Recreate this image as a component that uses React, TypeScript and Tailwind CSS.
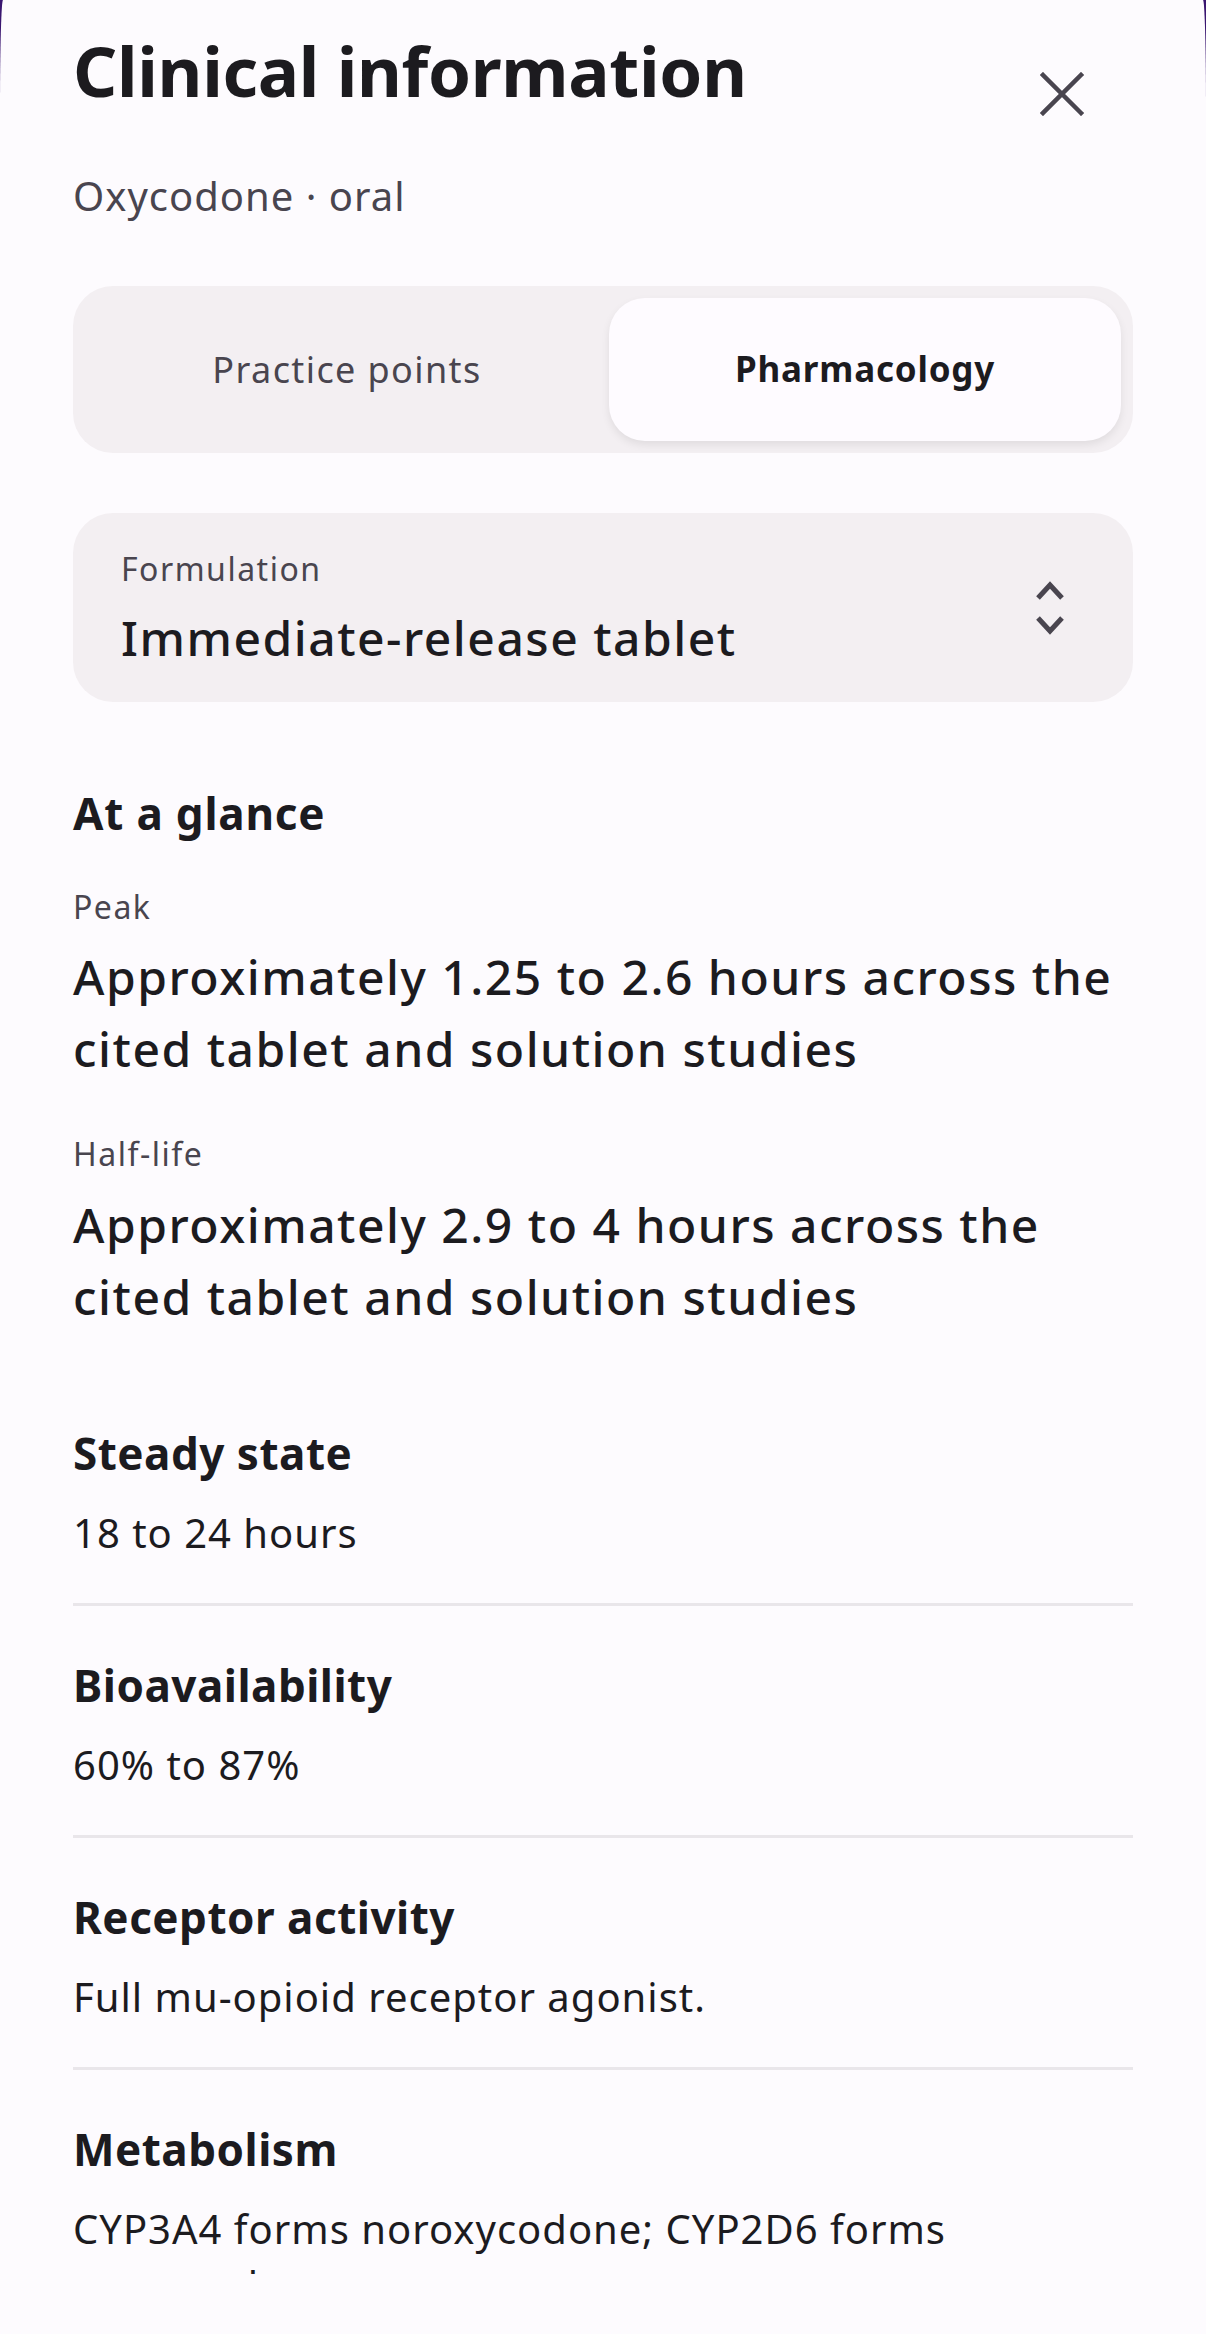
import React from "react";

const font = { fontFamily: '"Noto Sans", "Open Sans", sans-serif' };

interface Fact {
  title: string;
  body: string;
}

const facts: Fact[] = [
  { title: "Steady state", body: "18 to 24 hours" },
  { title: "Bioavailability", body: "60% to 87%" },
  { title: "Receptor activity", body: "Full mu-opioid receptor agonist." },
  {
    title: "Metabolism",
    body: "CYP3A4 forms noroxycodone; CYP2D6 forms oxymorphone.",
  },
];

function CloseIcon() {
  return (
    <svg width="44" height="44" viewBox="0 0 44 44" className="shrink-0">
      <path d="M3 3 L41 41 M41 3 L3 41" stroke="#49454f" strokeWidth="4.5" strokeLinecap="square" fill="none" />
    </svg>
  );
}

function UnfoldIcon() {
  return (
    <svg width="30" height="56" viewBox="0 0 30 56" className="shrink-0">
      <path d="M3 18 L15 5 L27 18" stroke="#49454f" strokeWidth="5" fill="none" />
      <path d="M3 38 L15 51 L27 38" stroke="#49454f" strokeWidth="5" fill="none" />
    </svg>
  );
}

export default function App() {
  return (
    <div className="w-[1206px] h-[2334px] overflow-hidden bg-[#3a1670]" style={font}>
      <div className="h-full bg-[#fdfbfe] rounded-tl-[3px_108px] rounded-tr-[3px_108px] px-[73px] text-[#1c1b1f]">
        {/* header */}
        <div className="flex items-start justify-between pt-[30px] h-[110px]">
          <h1 className="text-[69px] leading-[80px] font-bold tracking-[-0.3px]">Clinical information</h1>
          <div className="mt-[42px] mr-[49px]">
            <CloseIcon />
          </div>
        </div>
        <p className="mt-[58px] text-[40px] leading-[56px] tracking-[1px] text-[#49454f]">Oxycodone · oral</p>

        {/* tabs */}
        <div className="mt-[62px] h-[167px] rounded-[40px] bg-[#f3eff2] p-[12px] flex">
          <div className="flex-1 flex items-center justify-center text-[36px] tracking-[1.4px] text-[#49454f]">
            Practice points
          </div>
          <div className="w-[512px] rounded-[36px] bg-[#fefbff] shadow-[0_4px_8px_rgba(0,0,0,0.08)] flex items-center justify-center text-[35px] font-bold tracking-[0.8px] text-[#1c1b1f]">
            Pharmacology
          </div>
        </div>

        {/* formulation select */}
        <div className="mt-[60px] h-[189px] rounded-[40px] bg-[#f3eff2] pl-[48px] pr-[68px] flex items-center justify-between">
          <div className="pt-[1px]">
            <div className="text-[32px] leading-[40px] tracking-[1.5px] text-[#49454f]">Formulation</div>
            <div className="mt-[19px] text-[48px] leading-[60px] font-medium tracking-[1.5px]">Immediate-release tablet</div>
          </div>
          <UnfoldIcon />
        </div>

        {/* at a glance */}
        <h2 className="mt-[83px] text-[44px] leading-[56px] font-bold tracking-[0.8px]">At a glance</h2>
        <div className="mt-[46px] text-[32px] leading-[40px] tracking-[1.5px] text-[#49454f]">Peak</div>
        <p className="mt-[14px] text-[48px] leading-[72px] font-medium tracking-[1.5px]">
          Approximately 1.25 to 2.6 hours across the cited tablet and solution studies
        </p>
        <div className="mt-[49px] text-[32px] leading-[40px] tracking-[1.5px] text-[#49454f]">Half-life</div>
        <p className="mt-[15px] text-[48px] leading-[72px] font-medium tracking-[1.5px]">
          Approximately 2.9 to 4 hours across the cited tablet and solution studies
        </p>

        {/* fact list, clipped by the bottom of the sheet */}
        <div className="mt-[92px] h-[849px] overflow-hidden">
          {facts.map((f, i) => (
            <div key={f.title} className={i > 0 ? "border-t-[3px] border-[#e9e6ea] pt-[51px]" : ""}>
              <h3 className="text-[44px] leading-[56px] font-bold tracking-[0.5px]">{f.title}</h3>
              <p className="mt-[24px] pb-[42px] text-[40px] leading-[56px] tracking-[1px] text-[#1c1b1f]">{f.body}</p>
            </div>
          ))}
        </div>
      </div>
    </div>
  );
}
